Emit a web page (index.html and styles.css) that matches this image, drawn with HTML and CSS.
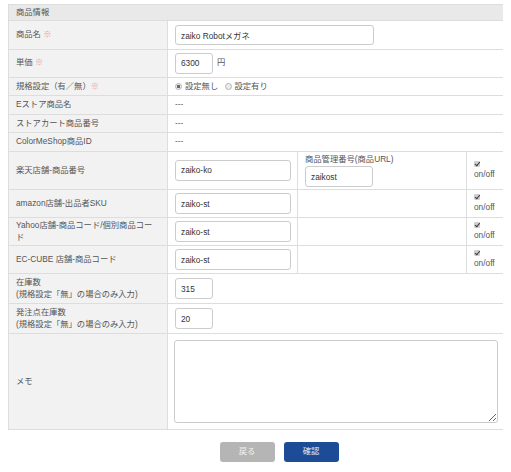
FILE: index.html
```html
<!DOCTYPE html>
<html lang="ja">
<head>
<meta charset="utf-8">
<title>商品情報</title>
<link rel="stylesheet" href="styles.css">
</head>
<body>
<table class="form">
  <colgroup>
    <col class="c-label">
    <col class="c-val">
    <col class="c-sub">
    <col class="c-chk">
  </colgroup>
  <tr class="head"><th colspan="4">商品情報</th></tr>
  <tr class="r-name">
    <th>商品名 <span class="req">※</span></th>
    <td colspan="3"><input class="in in-name" value="zaiko Robotメガネ"></td>
  </tr>
  <tr>
    <th>単価 <span class="req">※</span></th>
    <td colspan="3"><input class="in in-short" value="6300"><span class="unit">円</span></td>
  </tr>
  <tr class="r-text">
    <th>規格設定（有／無）<span class="req">※</span></th>
    <td colspan="3">
      <span class="radio on"></span><span class="rlabel">設定無し</span>
      <span class="radio"></span><span class="rlabel">設定有り</span>
    </td>
  </tr>
  <tr class="r-text"><th>Eストア商品名</th><td colspan="3" class="dash">---</td></tr>
  <tr class="r-text"><th>ストアカート商品番号</th><td colspan="3" class="dash">---</td></tr>
  <tr class="r-text"><th>ColorMeShop商品ID</th><td colspan="3" class="dash">---</td></tr>
  <tr>
    <th>楽天店舗-商品番号</th>
    <td><input class="in in-mid" value="zaiko-ko"></td>
    <td class="sub"><div class="sublabel">商品管理番号(商品URL)</div><input class="in in-sub" value="zaikost"></td>
    <td class="chk"><span class="cbox"></span><div>on/off</div></td>
  </tr>
  <tr>
    <th>amazon店舗-出品者SKU</th>
    <td><input class="in in-mid" value="zaiko-st"></td>
    <td class="sub"></td>
    <td class="chk"><span class="cbox"></span><div>on/off</div></td>
  </tr>
  <tr>
    <th>Yahoo店舗-商品コード/個別商品コード</th>
    <td><input class="in in-mid" value="zaiko-st"></td>
    <td class="sub"></td>
    <td class="chk"><span class="cbox"></span><div>on/off</div></td>
  </tr>
  <tr>
    <th>EC-CUBE 店舗-商品コード</th>
    <td><input class="in in-mid" value="zaiko-st"></td>
    <td class="sub"></td>
    <td class="chk"><span class="cbox"></span><div>on/off</div></td>
  </tr>
  <tr class="r-two">
    <th>在庫数<br>(規格設定「無」の場合のみ入力)</th>
    <td colspan="3"><input class="in in-short" value="315"></td>
  </tr>
  <tr class="r-two">
    <th>発注点在庫数<br>(規格設定「無」の場合のみ入力)</th>
    <td colspan="3"><input class="in in-short" value="20"></td>
  </tr>
  <tr class="r-memo">
    <th>メモ</th>
    <td colspan="3" class="memo"><textarea class="area"></textarea></td>
  </tr>
</table>
<div class="actions">
  <button class="btn btn-back" type="button">戻る</button>
  <button class="btn btn-ok" type="button">確認</button>
</div>
</body>
</html>
```

FILE: styles.css
```css
* { box-sizing: border-box; }

body {
  margin: 4px 8px 0 8px;
  background: #ffffff;
  font-family: "Liberation Sans", "Noto Sans CJK JP", sans-serif;
  font-size: 8.3px;
  line-height: 11.5px;
  color: #555555;
}

.form {
  width: 495px;
  table-layout: fixed;
  border-collapse: collapse;
  border: 1px solid #d9d9d9;
}

.c-label { width: 159px; }
.c-val { width: 130px; }
.c-sub { width: 169px; }
.c-chk { width: 37px; }

.form th,
.form td {
  border: 1px solid #dddddd;
  padding: 3px 7px;
  vertical-align: middle;
  text-align: left;
  font-weight: normal;
}

.form th {
  background: #f2f2f2;
  color: #555555;
  padding-top: 2px;
  padding-bottom: 2px;
}

.form td { background: #ffffff; }

.form .head th {
  background: #e9e9e9;
  padding: 1.5px 7px;
}

.r-text th,
.r-text td { padding-top: 3px; padding-bottom: 3px; }

.r-two th { padding-top: 3px; padding-bottom: 3px; }

.r-name td { padding-top: 4px; padding-bottom: 4px; }

.req { color: #f29a9a; }

.in {
  display: block;
  height: 21px;
  border: 1px solid #cccccc;
  border-radius: 3px;
  padding: 0 5px;
  font: inherit;
  color: #333333;
  background: #ffffff;
}

.in-name { width: 199px; height: 20px; }
.in-short { width: 38px; display: inline-block; vertical-align: middle; }
.in-mid { width: 116px; }
.in-sub { width: 68px; }

.unit { margin-left: 4px; vertical-align: middle; }

.dash { color: #666666; }

.radio {
  display: inline-block;
  width: 7px;
  height: 7px;
  border-radius: 50%;
  border: 1px solid #b5b5b5;
  background: #ececec;
  vertical-align: -1px;
  margin-right: 3px;
}

.radio.on { background: radial-gradient(circle, #6a6a6a 0 1.6px, #ececec 1.9px); }

.rlabel { margin-right: 4px; }

.form td.sub { padding-top: 2px; padding-bottom: 2px; }
.sublabel { margin-bottom: 1px; }

.chk { padding-left: 7px; padding-right: 2px; }

.cbox {
  display: block;
  width: 6px;
  height: 6px;
  border-radius: 1px;
  background: #cfcfcf;
  position: relative;
  margin-bottom: 2px;
}

.cbox::after {
  content: "";
  position: absolute;
  left: 1.6px;
  top: 0.4px;
  width: 2px;
  height: 3.6px;
  border: solid #333333;
  border-width: 0 1.2px 1.2px 0;
  transform: rotate(40deg);
}

.form td.memo { padding: 6px 5px 6px 6px; }

.area {
  display: block;
  width: 100%;
  height: 83px;
  border: 1px solid #cccccc;
  border-radius: 3px;
  resize: vertical;
  font: inherit;
}

.actions {
  display: flex;
  justify-content: center;
  gap: 9px;
  width: 495px;
  padding-left: 47px;
  margin-top: 12px;
}

.btn {
  width: 55px;
  height: 20px;
  border: none;
  border-radius: 3px;
  font: inherit;
  font-size: 8.3px;
  padding: 0;
}

.btn-back { background: #b5b5b5; color: #f2f2f2; }
.btn-ok { background: #1d4c97; color: #e6ebf5; }
```
